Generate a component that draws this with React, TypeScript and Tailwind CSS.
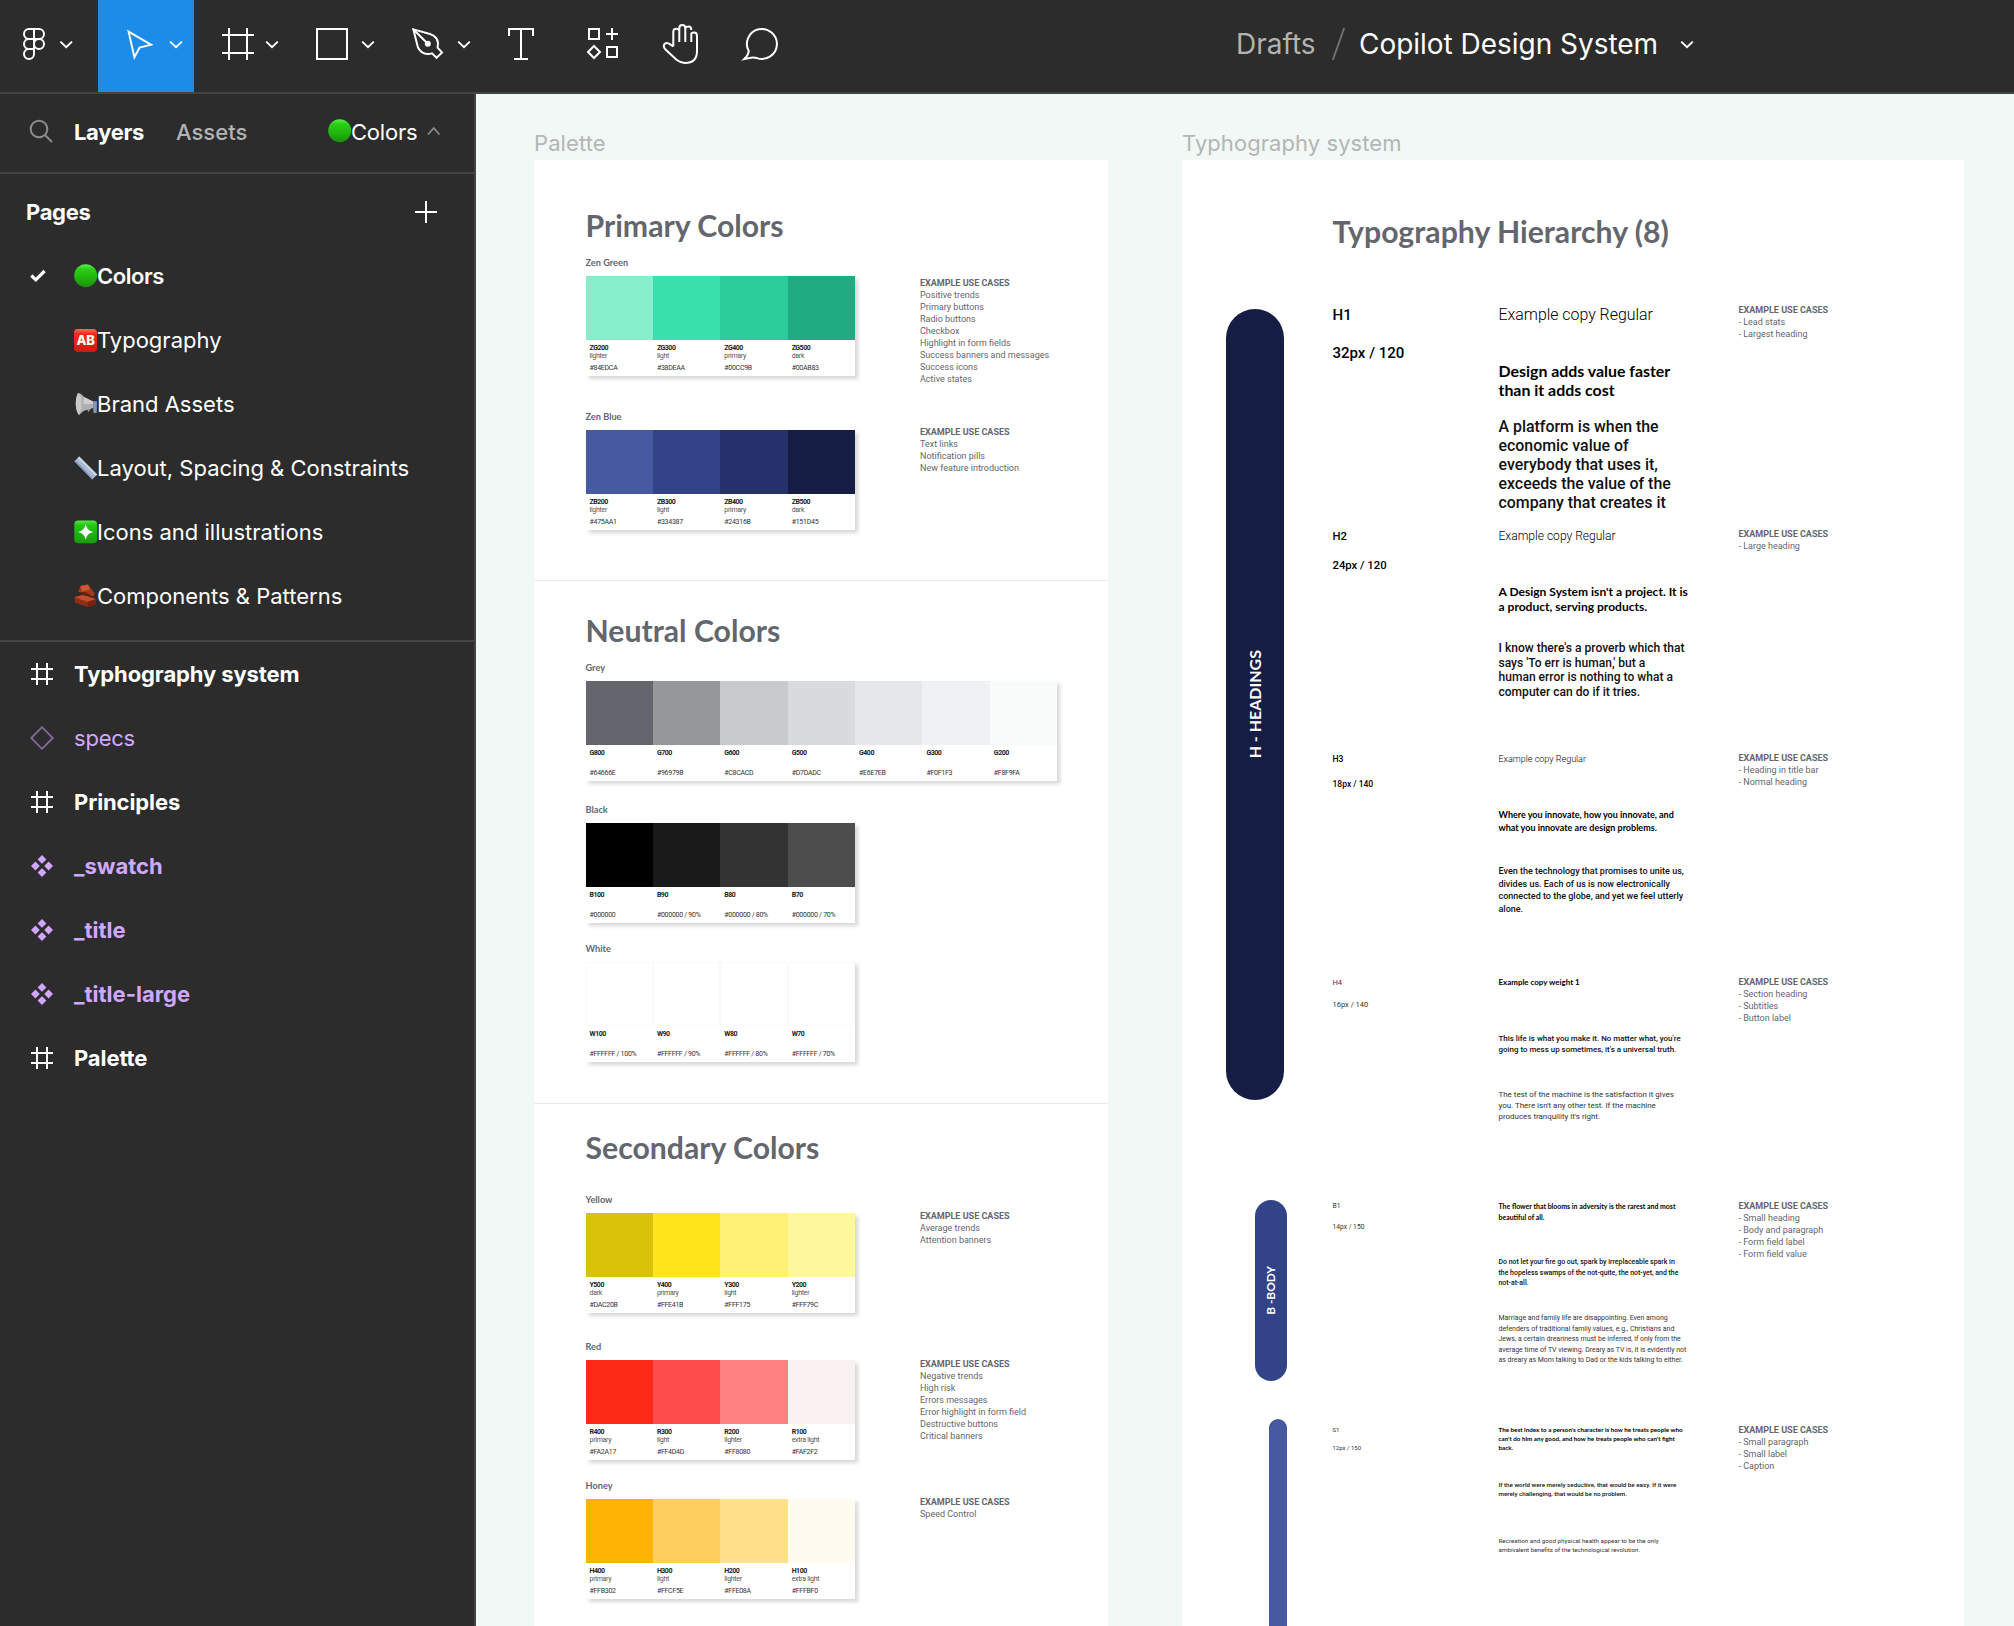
import React from "react";

/* ---------- Toolbar ---------- */

function Tool({ x, w, active = false, children }: { x: number; w: number; active?: boolean; children: React.ReactNode }) {
  return (
    <button className={active ? "h-[92px] bg-[#1c8ce8]" : "h-[92px]"}>
      <svg width={w} height={92} viewBox={`${x} 0 ${w} 92`} fill="none" stroke="#fff" strokeWidth={2}>
        {children}
      </svg>
    </button>
  );
}

function Chevron({ cx }: { cx: number }) {
  return <path d={`M${cx - 5.8} 41.6L${cx} 47.2L${cx + 5.8} 41.6`} />;
}

function Toolbar() {
  return (
    <header className="flex h-[94px] shrink-0 border-b-2 border-[#444] bg-[#2c2c2c]">
      <Tool x={0} w={98}>
        <path d="M34 29h-5a5 5 0 0 0 0 10h5zM34 29h5a5 5 0 0 1 0 10h-5zM34 39h-5a5 5 0 0 0 0 10h5zM34 49h-5a5 5 0 1 0 5 5z" />
        <circle cx={39} cy={44} r={5} />
        <Chevron cx={66.2} />
      </Tool>
      <Tool x={98} w={96} active>
        <path d="M128.6 31.6L151 44.6L139.6 47.6L134.4 57.2Z" />
        <Chevron cx={176} />
      </Tool>
      <Tool x={194} w={96}>
        <path d="M222 35h32M222 53h32M229 28v32M247 28v32" />
        <Chevron cx={272} />
      </Tool>
      <Tool x={290} w={96}>
        <rect x={317} y={29} width={30} height={30} />
        <Chevron cx={368} />
      </Tool>
      <Tool x={386} w={96}>
        <path d="M413.4 29.4L430 34Q437.3 36.5 438 43L437.6 47.6L442 52.4L436.6 57.8L432 53.4Q427 55 422.6 52.6Q418.3 50 417.3 45Z" />
        <path d="M413 29L427 43" />
        <circle cx={427.8} cy={43.8} r={3} fill="#fff" stroke="none" />
        <Chevron cx={464} />
      </Tool>
      <Tool x={482} w={80}>
        <path d="M509 36v-7h24v7M521 29v30M514 59h14" />
      </Tool>
      <Tool x={562} w={79}>
        <path d="M589 29h10v10h-10zM607 47h10v10h-10zM612 28v12M606 34h12M594 46l6 6l-6 6l-6-6z" />
      </Tool>
      <Tool x={641} w={79}>
        <path d="M673.3 46.5V31.6Q673.3 28.8 676.3 28.8Q679 28.8 679.3 31M679.3 42V28.2Q679.3 25 682.3 25Q685.3 25 685.3 28.2M685.3 42V28Q686.5 26.6 688.5 26.6Q691.3 26.6 691.3 30M691.3 42V33.5Q692.4 32.6 694 32.6Q697 32.6 697 36V51Q697 63 685 63Q680.5 63 676.5 59.8L665.5 49.5Q662.6 46.3 664.6 44Q667 41.8 669.8 44.2L673.3 46.5" />
      </Tool>
      <Tool x={720} w={80}>
        <path d="M748.8 51.2A15 15 0 1 1 757 58.1Q753 57.2 749.5 58L744.3 59Q748.3 55.4 748.8 51.2Z" />
      </Tool>
      <div className="ml-[436px] flex text-[28px] leading-[89px] text-white">
        <span className="w-[95px] text-[#b3b3b3]">Drafts</span>
        <svg width={28} height={92} viewBox="1331 0 28 92" stroke="#757575" strokeWidth={1.8}>
          <path d="M1332.8 60L1344.2 28" />
        </svg>
        <span className="w-[297px] whitespace-nowrap tracking-[-0.001em]">Copilot Design System</span>
        <svg width={60} height={92} viewBox="1656 0 60 92" fill="none" stroke="#fff" strokeWidth={2}>
          <Chevron cx={1687} />
        </svg>
      </div>
    </header>
  );
}

/* ---------- Emoji ---------- */

function GreenCircle() {
  return (
    <svg width={24} height={24} viewBox="0 0 24 24">
      <defs>
        <linearGradient id="gc" x1="0" y1="0" x2="0" y2="1">
          <stop offset="0" stopColor="#5cf24d" />
          <stop offset=".2" stopColor="#2bd016" />
          <stop offset=".6" stopColor="#20b50c" />
          <stop offset="1" stopColor="#1c8f0c" />
        </linearGradient>
      </defs>
      <circle cx={11.7} cy={11.7} r={11.5} fill="url(#gc)" />
    </svg>
  );
}

function AbBadge() {
  return (
    <span className="flex h-[23px] w-[23px] items-center justify-center rounded-[4px] bg-linear-to-b from-[#ff6a5a] via-[#f52a1c] via-20% to-[#cf1a0e] text-[13px] leading-none font-extrabold tracking-[-0.03em] text-white">
      AB
    </span>
  );
}

function Megaphone() {
  return (
    <svg width={24} height={24} viewBox="0 0 24 24">
      <path d="M12 9L22.5 9.5L22 21L19.5 21L19 14L14 20.5Z" fill="#8e959e" />
      <path d="M4 1Q7 1 10 5L19 9.5V16L9.5 19L5 23Q1.8 19 1.8 12T4 1Z" fill="#b0b0b0" />
      <path d="M4 1Q8 4 7.5 12T5 23Q1.8 19 1.8 12T4 1Z" fill="#c9c9c9" />
      <path d="M10 5L19 9.5V12L9.5 12Z" fill="#cfcfcf" />
      <path d="M20 9.5L22.8 9V20.5L20.5 21Z" fill="#7d97bd" />
    </svg>
  );
}

function Ruler() {
  return (
    <svg width={24} height={24} viewBox="0 0 24 24">
      <path d="M5.2 .6L23.2 18.6L18.2 23.4L.4 5.2Z" fill="#a9b9d3" />
      <path d="M5.2 .6L23.2 18.6L21.8 20L3.8 2Z" fill="#c9d6e8" />
      <path d="M.4 5.2L18.2 23.4L19 22.6L1.4 4.2Z" fill="#8093b3" />
    </svg>
  );
}

function Sparkle() {
  return (
    <svg width={24} height={24} viewBox="0 0 24 24">
      <defs>
        <linearGradient id="sp" x1="0" y1="0" x2="0" y2="1">
          <stop offset="0" stopColor="#5fe356" />
          <stop offset=".2" stopColor="#22c80f" />
          <stop offset="1" stopColor="#1a9d0b" />
        </linearGradient>
      </defs>
      <rect x={0.3} y={0.5} width={22.8} height={22.8} rx={4} fill="url(#sp)" />
      <path d="M11.7 4Q12.8 10.8 19.3 11.9Q12.8 13 11.7 19.8Q10.6 13 4.1 11.9Q10.6 10.8 11.7 4Z" fill="#fff" />
    </svg>
  );
}

function Bricks() {
  return (
    <svg width={24} height={24} viewBox="0 0 24 24">
      <path d="M.5 13L9 11L22 15V20.5L13.5 23L1 18.5Z" fill="#8c2f14" />
      <path d="M.5 13L9 11L22 15L13.5 18Z" fill="#c24e2b" />
      <path d="M13.5 18V23L22 20.5V15Z" fill="#742410" />
      <path d="M6.5 2L14 .6L21 9.5L19 13L12 8.5L4 8Z" fill="#a33a1b" />
      <path d="M6.5 2L14 .6L16 5.5L8 7.5Z" fill="#cc5833" />
      <path d="M4 8L12 8.5L19 13L10 11.5Z" fill="#6a200d" />
    </svg>
  );
}

/* ---------- Sidebar ---------- */

const pages: [React.ReactNode, string][] = [
  [<GreenCircle />, "Colors"],
  [<AbBadge />, "Typography"],
  [<Megaphone />, "Brand Assets"],
  [<Ruler />, "Layout, Spacing & Constraints"],
  [<Sparkle />, "Icons and illustrations"],
  [<Bricks />, "Components & Patterns"],
];

const layers: ["frame" | "instance" | "component", string][] = [
  ["frame", "Typhography system"],
  ["instance", "specs"],
  ["frame", "Principles"],
  ["component", "_swatch"],
  ["component", "_title"],
  ["component", "_title-large"],
  ["frame", "Palette"],
];

function LayerIcon({ kind }: { kind: "frame" | "instance" | "component" }) {
  if (kind === "frame")
    return (
      <svg width={24} height={24} viewBox="0 0 24 24" stroke="#fff" strokeWidth={2}>
        <path d="M1 7h22M1 17h22M7 1v22M17 1v22" />
      </svg>
    );
  if (kind === "instance")
    return (
      <svg width={24} height={24} viewBox="0 0 24 24" fill="none" stroke="#836a9c" strokeWidth={1.8}>
        <path d="M12 1.2L22.8 12L12 22.8L1.2 12Z" />
      </svg>
    );
  return (
    <svg width={24} height={24} viewBox="0 0 24 24" fill="#d1a8ff">
      <path d="M12 1l4.400 4.400l-4.400 4.400l-4.400-4.400zM12 14.200l4.400 4.400l-4.400 4.400l-4.400-4.400zM5.400 7.600l4.400 4.400l-4.400 4.400l-4.400-4.400zM18.600 7.600l4.400 4.400l-4.400 4.400l-4.400-4.400z" />
    </svg>
  );
}

function Sidebar() {
  return (
    <aside className="w-[476px] shrink-0 border-r-2 border-[#444] bg-[#2c2c2c] text-[22px] text-white">
      <div className="flex h-[80px] items-start border-b-2 border-[#444] pt-[25px] pl-[29px] leading-[26px]">
        <svg width={45} height={26} viewBox="29 119 45 26" fill="none" stroke="#8c8c8c" strokeWidth={2}>
          <circle cx={39} cy={129} r={8.3} />
          <path d="M45 135L52 142" />
        </svg>
        <span className="w-[102px] font-bold tracking-[-0.015em]">Layers</span>
        <span className="w-[152px] font-medium text-[#b3b3b3]">Assets</span>
        <GreenCircle />
        <span className="-ml-px tracking-[-0.01em]">Colors</span>
        <svg className="ml-[9px]" width={16} height={26} viewBox="426 119 16 26" fill="none" stroke="#8c8c8c" strokeWidth={1.8}>
          <path d="M428 134.5L433.7 128L439.4 134.5" />
        </svg>
      </div>

      <section className="h-[468px] border-b-2 border-[#444] pt-[6px]">
        <div className="flex h-16 items-center pl-[26px]">
          <span className="w-[388px] font-bold tracking-[-0.015em]">Pages</span>
          <svg width={24} height={24} viewBox="0 0 24 24" stroke="#fff" strokeWidth={2}>
            <path d="M1 12h22M12 1v22" />
          </svg>
        </div>
        {pages.map(([icon, name], i) => (
          <div key={name} className="flex h-16 items-center pl-[30px]">
            <div className="w-[44px]">
              {i === 0 && (
                <svg width={16} height={14} viewBox="0 0 16 14" fill="none" stroke="#fff" strokeWidth={3.2}>
                  <path d="M1.3 6.5L5.8 10.8L14.6 2" />
                </svg>
              )}
            </div>
            <div className="w-[23px] shrink-0">{icon}</div>
            <span className={i === 0 ? "leading-[64px] font-semibold tracking-[-0.02em]" : "leading-[64px]"}>{name}</span>
          </div>
        ))}
      </section>

      {layers.map(([kind, name]) => (
        <div key={name} className="flex h-16 items-center pl-[30px]">
          <div className="w-[44px]">
            <LayerIcon kind={kind} />
          </div>
          <span
            className={
              kind === "frame"
                ? "font-bold tracking-[-0.005em]"
                : kind === "component"
                  ? "font-bold text-[#d1a8ff]"
                  : "tracking-[-0.01em] text-[#d1a8ff]"
            }
          >
            {name}
          </span>
        </div>
      ))}
    </aside>
  );
}

/* ---------- Palette frame ---------- */

type Swatch = [color: string, code: string, note: string, hex: string];

function UseCases({ items, className = "" }: { items: string[]; className?: string }) {
  return (
    <div className={"font-[Roboto] text-[9px] leading-[12px] whitespace-nowrap text-[#64666e] " + className}>
      <div className="font-bold">EXAMPLE USE CASES</div>
      {items.map((t) => (
        <div key={t}>{t}</div>
      ))}
    </div>
  );
}

function Group({
  label,
  swatches,
  uses,
  usesClass,
  className = "",
  outlined = false,
}: {
  label: string;
  swatches: Swatch[];
  uses?: string[];
  usesClass?: string;
  className?: string;
  outlined?: boolean;
}) {
  return (
    <div className={"flex h-[120px] items-start " + className}>
      <div className="w-[334.5px] shrink-0">
        <div className="h-5 pt-px font-[Lato] text-[9.2px] leading-[12px] font-bold text-[#64666e]">{label}</div>
        <div className="flex h-[100px] w-fit bg-white shadow-[3px_3px_4px_rgba(0,0,0,0.16)]">
          {swatches.map(([color, code, note, hex]) => (
            <div key={code} className="w-[67.4px] font-[Roboto] text-[7px] leading-[8.500px] tracking-[-0.04em] whitespace-nowrap text-[#333]">
              <div
                className={outlined ? "h-[64px] border border-[#fafafa]" : "h-[64px]"}
                style={{ backgroundColor: color }}
              />
              <div className="pt-[3.500px] pl-1">
                <div className="text-[7px] font-bold tracking-[-0.070em] text-[#222]">{code}</div>
                <div className="h-[8.500px] text-[#555]">{note}</div>
                <div className="mt-[3px]">{hex}</div>
              </div>
            </div>
          ))}
        </div>
      </div>
      {uses && <UseCases items={uses} className={usesClass} />}
    </div>
  );
}

function Heading({ children }: { children: React.ReactNode }) {
  return <h2 className="font-[Lato] text-[30.2px] leading-[36px] font-bold text-[#64666e]">{children}</h2>;
}

function Palette() {
  return (
    <div className="w-[574px] shrink-0">
      <div className="h-[66px] pt-[34.5px] text-[22px] leading-[28px] tracking-[0.005em] text-[#b3b6b5]">Palette</div>
      <div className="h-[1466px] overflow-hidden bg-white">
        <section className="h-[421px] border-b border-[#e9ebeb] pt-[47px] pl-[51.5px]">
          <Heading>Primary Colors</Heading>
          <Group
            className="mt-[13px]"
            label="Zen Green"
            usesClass="pt-[20.500px]"
            uses={[
              "Positive trends",
              "Primary buttons",
              "Radio buttons",
              "Checkbox",
              "Highlight in form fields",
              "Success banners and messages",
              "Success icons",
              "Active states",
            ]}
            swatches={[
              ["#86EECB", "ZG200", "lighter", "#84EDCA"],
              ["#38E0AC", "ZG300", "light", "#38DEAA"],
              ["#2CCC9B", "ZG400", "primary", "#00CC9B"],
              ["#21AB83", "ZG500", "dark", "#00AB83"],
            ]}
          />
          <Group
            className="mt-[34px]"
            label="Zen Blue"
            usesClass="pt-[16px]"
            uses={["Text links", "Notification pills", "New feature introduction"]}
            swatches={[
              ["#475AA1", "ZB200", "lighter", "#475AA1"],
              ["#334387", "ZB300", "light", "#334387"],
              ["#24316B", "ZB400", "primary", "#24316B"],
              ["#151D45", "ZB500", "dark", "#151D45"],
            ]}
          />
        </section>
        <section className="h-[523px] border-b border-[#e9ebeb] pt-[31px] pl-[51.5px]">
          <Heading>Neutral Colors</Heading>
          <Group
            className="mt-[13px]"
            label="Grey"
            swatches={[
              ["#64666E", "G800", "", "#64666E"],
              ["#96979B", "G700", "", "#96979B"],
              ["#C8CACD", "G600", "", "#C8CACD"],
              ["#D9DADC", "G500", "", "#D7DADC"],
              ["#E6E7EB", "G400", "", "#E6E7EB"],
              ["#F0F1F3", "G300", "", "#F0F1F3"],
              ["#F9FAFA", "G200", "", "#F8F9FA"],
            ]}
          />
          <Group
            className="mt-[22px]"
            label="Black"
            swatches={[
              ["#000000", "B100", "", "#000000"],
              ["#1A1A1A", "B90", "", "#000000 / 90%"],
              ["#333333", "B80", "", "#000000 / 80%"],
              ["#4D4D4D", "B70", "", "#000000 / 70%"],
            ]}
          />
          <Group
            className="mt-[19px]"
            label="White"
            outlined
            swatches={[
              ["#FFFFFF", "W100", "", "#FFFFFF / 100%"],
              ["#FFFFFF", "W90", "", "#FFFFFF / 90%"],
              ["#FFFFFF", "W80", "", "#FFFFFF / 80%"],
              ["#FFFFFF", "W70", "", "#FFFFFF / 70%"],
            ]}
          />
        </section>
        <section className="pt-[25px] pl-[51.5px]">
          <Heading>Secondary Colors</Heading>
          <Group
            className="mt-[28px]"
            label="Yellow"
            usesClass="pt-[16.500px]"
            uses={["Average trends", "Attention banners"]}
            swatches={[
              ["#DAC20B", "Y500", "dark", "#DAC20B"],
              ["#FFE41B", "Y400", "primary", "#FFE41B"],
              ["#FFF175", "Y300", "light", "#FFF175"],
              ["#FFF79C", "Y200", "lighter", "#FFF79C"],
            ]}
          />
          <Group
            className="mt-[27px]"
            label="Red"
            usesClass="pt-[18px]"
            uses={[
              "Negative trends",
              "High risk",
              "Errors messages",
              "Error highlight in form field",
              "Destructive buttons",
              "Critical banners",
            ]}
            swatches={[
              ["#FD2A17", "R400", "primary", "#FA2A17"],
              ["#FF4D4D", "R300", "light", "#FF4D4D"],
              ["#FF8080", "R200", "lighter", "#FF8080"],
              ["#FAF2F2", "R100", "extra light", "#FAF2F2"],
            ]}
          />
          <Group
            className="mt-[19px]"
            label="Honey"
            usesClass="pt-[16.500px]"
            uses={["Speed Control"]}
            swatches={[
              ["#FFB302", "H400", "primary", "#FFB302"],
              ["#FFCF5E", "H300", "light", "#FFCF5E"],
              ["#FFE08A", "H200", "lighter", "#FFE08A"],
              ["#FFFBF0", "H100", "extra light", "#FFFBF0"],
            ]}
          />
        </section>
      </div>
    </div>
  );
}

/* ---------- Typography frame ---------- */

type Sample = { weight: "light" | "regular" | "medium" | "bold"; lines: string[] };
type Level = { name: string; spec: string; text: string; specClass: string; samples: Sample[]; uses: string[] };

const sampleClass = {
  light: "font-[Roboto] font-light text-black",
  regular: "font-[Roboto] text-[#333]",
  medium: "font-[Roboto] font-medium text-[#111]",
  bold: "font-[Lato] font-bold text-black",
};

const levels: Level[] = [
  {
    name: "H1",
    spec: "32px / 120",
    text: "text-[15.900px] leading-[19px]",
    specClass: "pt-px text-[15px] font-medium",
    samples: [
      { weight: "light", lines: ["Example copy Regular"] },
      { weight: "bold", lines: ["Design adds value faster", "than it adds cost"] },
      {
        weight: "medium",
        lines: [
          "A platform is when the",
          "economic value of",
          "everybody that uses it,",
          "exceeds the value of the",
          "company that creates it",
        ],
      },
    ],
    uses: ["- Lead stats", "- Largest heading"],
  },
  {
    name: "H2",
    spec: "24px / 120",
    text: "text-[12.050px] leading-[14.500px]",
    specClass: "pt-px text-[11.300px] font-medium",
    samples: [
      { weight: "light", lines: ["Example copy Regular"] },
      { weight: "bold", lines: ["A Design System isn't a project. It is", "a product, serving products."] },
      {
        weight: "medium",
        lines: [
          "I know there's a proverb which that",
          "says 'To err is human,' but a",
          "human error is nothing to what a",
          "computer can do if it tries.",
        ],
      },
    ],
    uses: ["- Large heading"],
  },
  {
    name: "H3",
    spec: "18px / 140",
    text: "text-[9px] leading-[12.500px]",
    specClass: "text-[8.500px] font-medium",
    samples: [
      { weight: "light", lines: ["Example copy Regular"] },
      { weight: "bold", lines: ["Where you innovate, how you innovate, and", "what you innovate are design problems."] },
      {
        weight: "medium",
        lines: [
          "Even the technology that promises to unite us,",
          "divides us. Each of us is now electronically",
          "connected to the globe, and yet we feel utterly",
          "alone.",
        ],
      },
    ],
    uses: ["- Heading in title bar", "- Normal heading"],
  },
  {
    name: "H4",
    spec: "16px / 140",
    text: "text-[7.950px] leading-[11px]",
    specClass: "text-[7.500px] text-[#333]",
    samples: [
      { weight: "bold", lines: ["Example copy weight 1"] },
      {
        weight: "medium",
        lines: ["This life is what you make it. No matter what, you're", "going to mess up sometimes, it's a universal truth."],
      },
      {
        weight: "regular",
        lines: [
          "The test of the machine is the satisfaction it gives",
          "you. There isn't any other test. If the machine",
          "produces tranquility it's right.",
        ],
      },
    ],
    uses: ["- Section heading", "- Subtitles", "- Button label"],
  },
  {
    name: "B1",
    spec: "14px / 150",
    text: "text-[6.950px] leading-[10.500px]",
    specClass: "text-[6.700px] text-[#333]",
    samples: [
      { weight: "bold", lines: ["The flower that blooms in adversity is the rarest and most", "beautiful of all."] },
      {
        weight: "medium",
        lines: [
          "Do not let your fire go out, spark by irreplaceable spark in",
          "the hopeless swamps of the not-quite, the not-yet, and the",
          "not-at-all.",
        ],
      },
      {
        weight: "regular",
        lines: [
          "Marriage and family life are disappointing. Even among",
          "defenders of traditional family values, e.g., Christians and",
          "Jews, a certain dreariness must be inferred, if only from the",
          "average time of TV viewing. Dreary as TV is, it is evidently not",
          "as dreary as Mom talking to Dad or the kids talking to either.",
        ],
      },
    ],
    uses: ["- Small heading", "- Body and paragraph", "- Form field label", "- Form field value"],
  },
  {
    name: "S1",
    spec: "12px / 150",
    text: "text-[6.250px] leading-[9px]",
    specClass: "text-[6px] text-[#333]",
    samples: [
      {
        weight: "bold",
        lines: [
          "The best index to a person's character is how he treats people who",
          "can't do him any good, and how he treats people who can't fight",
          "back.",
        ],
      },
      {
        weight: "medium",
        lines: [
          "If the world were merely seductive, that would be easy. If it were",
          "merely challenging, that would be no problem.",
        ],
      },
      {
        weight: "regular",
        lines: ["Recreation and good physical health appear to be the only", "ambivalent benefits of the technological revolution."],
      },
    ],
    uses: ["- Small paragraph", "- Small label", "- Caption"],
  },
];

function Typography() {
  return (
    <div className="w-[782px] shrink-0">
      <div className="h-[66px] pt-[34.5px] text-[22px] leading-[28px] tracking-[0.003em] text-[#b3b6b5]">Typhography system</div>
      <div className="h-[1466px] overflow-hidden bg-white pt-[53px]">
        <div className="pl-[150.5px]">
          <Heading>Typography Hierarchy (8)</Heading>
        </div>
        <div className="mt-[55px] flex">
          <div className="w-[150.5px] shrink-0 pt-[5px] font-[Lato] font-bold text-white">
            <div className="ml-[44px] flex h-[791px] w-[58px] items-center justify-center rounded-full bg-[#151d45]">
              <span className="rotate-180 text-[16px] leading-[20px] [writing-mode:vertical-rl]">H - HEADINGS</span>
            </div>
            <div className="mt-[100px] ml-[73px] flex h-[181px] w-[32px] items-center justify-center rounded-full bg-[#334387]">
              <span className="rotate-180 text-[11.900px] leading-[16px] [writing-mode:vertical-rl]">B -BODY</span>
            </div>
            <div className="mt-[38px] ml-[87px] h-[400px] w-[18px] rounded-full bg-[#475aa1]" />
          </div>
          <div>
            {levels.map((l) => (
              <div key={l.name} className="grid h-[224px] grid-cols-[166px_240px_1fr]">
                <div className={"pt-px font-[Roboto] whitespace-nowrap " + l.text}>
                  <div className={l.specClass + " [line-height:inherit]"}>
                    {l.name}
                    <br />
                    <br />
                    {l.spec}
                  </div>
                </div>
                <div className={"pt-px " + l.text}>
                  {l.samples.map((s, i) => (
                    <div key={i} className={"h-14 whitespace-nowrap " + sampleClass[s.weight]}>
                      {s.lines.map((t) => (
                        <div key={t}>{t}</div>
                      ))}
                    </div>
                  ))}
                </div>
                <UseCases items={l.uses} />
              </div>
            ))}
          </div>
        </div>
      </div>
    </div>
  );
}

export default function App() {
  return (
    <div className="flex h-[1626px] w-[2014px] flex-col overflow-hidden bg-[#f2f8f6] font-[Inter]">
      <Toolbar />
      <div className="flex min-h-0 flex-1">
        <Sidebar />
        <main className="flex flex-1 gap-[74px] overflow-hidden pl-[58px]">
          <Palette />
          <Typography />
        </main>
      </div>
    </div>
  );
}
